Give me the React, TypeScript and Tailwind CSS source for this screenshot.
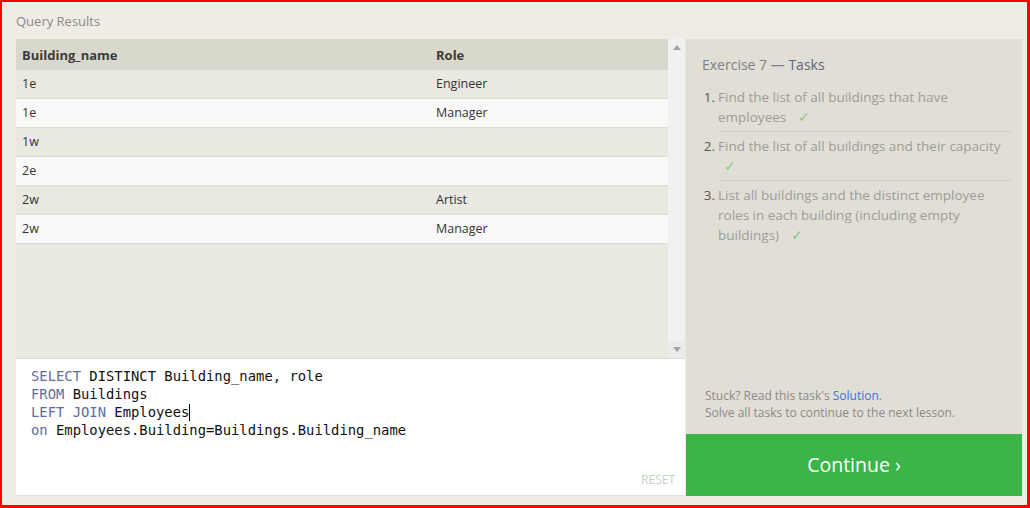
import React from "react";

const rows: [string, string][] = [
  ["1e", "Engineer"],
  ["1e", "Manager"],
  ["1w", ""],
  ["2e", ""],
  ["2w", "Artist"],
  ["2w", "Manager"],
];

const Check = () => <span className="ml-[8px] text-[#86c886]">✓</span>;

export default function App() {
  const sans = { fontFamily: '"Open Sans", "Noto Sans", sans-serif' };
  return (
    <div
      className="w-[1030px] h-[508px] box-border border-solid border-[#ff0000] border-t-2 border-l-2 border-r-[3px] border-b-[3px] bg-[#efece5] flex flex-col overflow-hidden"
      style={sans}
    >
      <div className="pl-[14px] pt-[10px] h-[37px] text-[13px] leading-[18px] text-[#8a8a8a]">Query Results</div>
      <div className="flex h-[457px] pl-[14px] pr-[5px]">
        {/* left column */}
        <div className="w-[670px] flex flex-col">
          <div className="h-[319px] flex bg-[#e9e8e1]">
            <div className="w-[652px] flex flex-col text-[12.5px] text-[#333]">
              <div className="h-[31px] flex items-center pt-[2px] bg-[#d9d8cc] font-bold text-[#3c3c3c] text-[13px]">
                <div className="w-[420px] pl-[6px]">Building_name</div>
                <div>Role</div>
              </div>
              {rows.map((r, i) => (
                <div
                  key={i}
                  className={`h-[29px] flex items-center pt-[1px] border-b border-[#dddbd3] ${i % 2 === 0 ? "bg-[#e9e8e1]" : "bg-[#f9f9f8]"}`}
                >
                  <div className="w-[420px] pl-[6px]">{r[0]}</div>
                  <div>{r[1]}</div>
                </div>
              ))}
            </div>
            <div className="w-[17px] bg-[#f1f1f1] flex flex-col justify-between items-center">
              <div className="h-[17px] flex items-center justify-center">
                <svg width="8" height="5" viewBox="0 0 8 5"><path d="M0 5 L4 0 L8 5 Z" fill="#a3a3a3" /></svg>
              </div>
              <div className="h-[17px] w-full bg-[#ebebeb] flex items-center justify-center">
                <svg width="8" height="5" viewBox="0 0 8 5"><path d="M0 0 L8 0 L4 5 Z" fill="#a3a3a3" /></svg>
              </div>
            </div>
          </div>
          <div className="h-[138px] bg-white border-t border-[#dddbd3] border-b border-b-[#e4e2da] flex flex-col w-[669px]">
            <div
              className="pl-[15px] pt-[8px] text-[13.85px] leading-[18px] text-[#111]"
              style={{ fontFamily: '"DejaVu Sans Mono", "Liberation Mono", monospace' }}
            >
              <div><span className="text-[#5f6d9f]">SELECT</span> DISTINCT Building_name, role</div>
              <div><span className="text-[#5f6d9f]">FROM</span> Buildings</div>
              <div>
                <span className="text-[#5f6d9f]">LEFT JOIN</span> Employees
                <span className="inline-block w-[1px] h-[17px] bg-black align-[-4px]" />
              </div>
              <div><span className="text-[#5f6d9f]">on</span> Employees.Building=Buildings.Building_name</div>
            </div>
            <div className="mt-auto self-end pr-[10px] pb-[6px] text-[12px] text-[#c2d4c2]">RESET</div>
          </div>
        </div>
        {/* right column */}
        <div className="flex-1 flex flex-col">
          <div className="h-[395px] bg-[#e1dfd5] pl-[16px] pr-[9px] pt-[16px] flex flex-col">
            <div className="text-[14px] leading-[20px] text-[#7b808a]">
              Exercise 7 — <span className="text-[#5a6780]">Tasks</span>
            </div>
            <div className="mt-[12px] text-[13.5px] leading-[20px] text-[#9c9c9c]">
              <div className="flex">
                <div className="w-[16px] shrink-0 text-right pr-[3px] text-[#555]">1.</div>
                <div className="flex-1 pb-[4px] border-b border-[#d2d0c6]">
                  Find the list of all buildings that have<br />employees <Check />
                </div>
              </div>
              <div className="flex">
                <div className="w-[16px] shrink-0 text-right pr-[3px] text-[#555] pt-[4px]">2.</div>
                <div className="flex-1 pt-[4px] pb-[4px] border-b border-[#d2d0c6]">
                  Find the list of all buildings and their capacity<br /><span className="ml-[-2px]"><Check /></span>
                </div>
              </div>
              <div className="flex">
                <div className="w-[16px] shrink-0 text-right pr-[3px] text-[#555] pt-[4px]">3.</div>
                <div className="flex-1 pt-[4px]">
                  List all buildings and the distinct employee<br />roles in each building (including empty<br />buildings) <Check />
                </div>
              </div>
            </div>
            <div className="mt-auto pb-[13px] pl-[3px] text-[12px] leading-[17px] text-[#8a8a8a]">
              <div>Stuck? Read this task's <span className="text-[#3f6fe0]">Solution</span>.</div>
              <div>Solve all tasks to continue to the next lesson.</div>
            </div>
          </div>
          <div className="h-[62px] bg-[#3bb54a] flex items-center justify-center text-white text-[19.5px]">
            Continue ›
          </div>
        </div>
      </div>
    </div>
  );
}
